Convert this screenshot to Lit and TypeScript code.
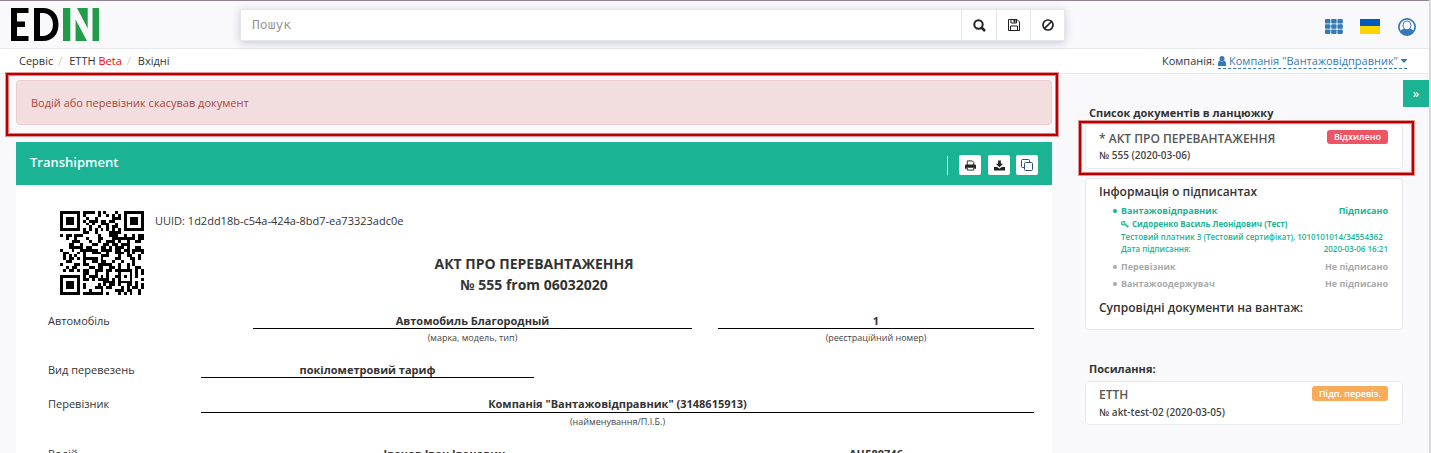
import { LitElement, html, css, svg } from "lit";
import { customElement, property } from "lit/decorators.js";

const QR_SIZE = 29;
const QR_DATA_WORDS = 44;
const QR_EC_WORDS = 26;

function gfMul(a: number, b: number): number {
  let r = 0;
  for (let i = 7; i >= 0; i--) {
    r = (r << 1) ^ ((r >>> 7) * 0x11d);
    r ^= ((b >>> i) & 1) * a;
  }
  return r & 255;
}

/** Version 3, level M, byte mode. */
function encodeQr(text: string, mask: number): boolean[][] {
  const bits: number[] = [];
  const put = (v: number, n: number) => {
    for (let i = n - 1; i >= 0; i--) bits.push((v >>> i) & 1);
  };
  put(4, 4);
  put(text.length, 8);
  for (const ch of text) put(ch.charCodeAt(0), 8);
  put(0, 4);
  while (bits.length % 8) bits.push(0);
  const words: number[] = [];
  for (let i = 0; i < bits.length; i += 8) words.push(parseInt(bits.slice(i, i + 8).join(""), 2));
  for (let p = 0xec; words.length < QR_DATA_WORDS; p ^= 0xec ^ 0x11) words.push(p);

  const div: number[] = new Array(QR_EC_WORDS).fill(0);
  div[QR_EC_WORDS - 1] = 1;
  let root = 1;
  for (let i = 0; i < QR_EC_WORDS; i++) {
    for (let j = 0; j < QR_EC_WORDS; j++) {
      div[j] = gfMul(div[j], root);
      if (j + 1 < QR_EC_WORDS) div[j] ^= div[j + 1];
    }
    root = gfMul(root, 2);
  }
  const rem: number[] = new Array(QR_EC_WORDS).fill(0);
  for (const w of words) {
    const f = w ^ (rem.shift() as number);
    rem.push(0);
    div.forEach((c, i) => (rem[i] ^= gfMul(c, f)));
  }
  const all = words.concat(rem);

  const m: boolean[][] = Array.from({ length: QR_SIZE }, () => new Array(QR_SIZE).fill(false));
  const fixed: boolean[][] = Array.from({ length: QR_SIZE }, () => new Array(QR_SIZE).fill(false));
  const set = (x: number, y: number, v: boolean) => {
    if (x < 0 || y < 0 || x >= QR_SIZE || y >= QR_SIZE) return;
    m[y][x] = v;
    fixed[y][x] = true;
  };
  for (let i = 0; i < QR_SIZE; i++) {
    set(6, i, i % 2 === 0);
    set(i, 6, i % 2 === 0);
  }
  for (const [cx, cy] of [[3, 3], [QR_SIZE - 4, 3], [3, QR_SIZE - 4]])
    for (let dy = -4; dy <= 4; dy++)
      for (let dx = -4; dx <= 4; dx++) {
        const d = Math.max(Math.abs(dx), Math.abs(dy));
        set(cx + dx, cy + dy, d !== 2 && d !== 4);
      }
  for (let dy = -2; dy <= 2; dy++)
    for (let dx = -2; dx <= 2; dx++) set(22 + dx, 22 + dy, Math.max(Math.abs(dx), Math.abs(dy)) !== 1);

  let fr = mask;
  for (let i = 0; i < 10; i++) fr = (fr << 1) ^ ((fr >>> 9) * 0x537);
  const fmt = ((mask << 10) | fr) ^ 0x5412;
  const fb = (i: number) => ((fmt >>> i) & 1) === 1;
  for (let i = 0; i <= 5; i++) set(8, i, fb(i));
  set(8, 7, fb(6));
  set(8, 8, fb(7));
  set(7, 8, fb(8));
  for (let i = 9; i < 15; i++) set(14 - i, 8, fb(i));
  for (let i = 0; i < 8; i++) set(QR_SIZE - 1 - i, 8, fb(i));
  for (let i = 8; i < 15; i++) set(8, QR_SIZE - 15 + i, fb(i));
  set(8, QR_SIZE - 8, true);

  const masks: ((x: number, y: number) => boolean)[] = [
    (x, y) => (x + y) % 2 === 0,
    (_x, y) => y % 2 === 0,
    (x) => x % 3 === 0,
    (x, y) => (x + y) % 3 === 0,
    (x, y) => (Math.floor(x / 3) + Math.floor(y / 2)) % 2 === 0,
    (x, y) => ((x * y) % 2) + ((x * y) % 3) === 0,
    (x, y) => (((x * y) % 2) + ((x * y) % 3)) % 2 === 0,
    (x, y) => (((x + y) % 2) + ((x * y) % 3)) % 2 === 0,
  ];
  let k = 0;
  for (let right = QR_SIZE - 1; right >= 1; right -= 2) {
    if (right === 6) right = 5;
    for (let v = 0; v < QR_SIZE; v++)
      for (let j = 0; j < 2; j++) {
        const x = right - j;
        const up = ((right + 1) & 2) === 0;
        const y = up ? QR_SIZE - 1 - v : v;
        if (fixed[y][x]) continue;
        const bit = k < all.length * 8 && ((all[k >>> 3] >>> (7 - (k & 7))) & 1) === 1;
        k++;
        m[y][x] = bit !== masks[mask](x, y);
      }
  }
  return m;
}

@customElement("qr-code")
export class QrCode extends LitElement {
  @property() value = "";
  @property({ type: Number }) mask = 3;
  static styles = css`
    :host { display: block; }
    svg { display: block; width: 100%; height: 100%; }
  `;
  render() {
    const rows = encodeQr(this.value, this.mask);
    const d = rows.map((r, y) => r.map((v, x) => (v ? `M${x} ${y}h1v1h-1z` : "")).join("")).join("");
    return html`<svg viewBox="0 0 29 29" shape-rendering="crispEdges">${svg`<path d=${d}/>`}</svg>`;
  }
}

@customElement("app-root")
export class AppRoot extends LitElement {
  static styles = css`
    :host {
      display: block; position: relative; box-sizing: border-box; height: 453px; overflow: hidden;
      background: #f9f9fb; color: #333; font: 11px/16px "Open Sans", "Noto Sans", sans-serif;
      border-right: 2px solid #d9d9d9;
    }
    * { box-sizing: border-box; }
    .header { height: 49px; border-top: 1px solid #8f8391; border-bottom: 1px solid #e7eaec; display: flex; align-items: flex-start; padding: 7px 13px 0 11px; }
    .logo { width: 88px; height: 33px; margin-right: 141px; }
    .search { display: flex; margin-top: 1px; width: 825px; height: 32px; box-shadow: 0 2px 8px rgba(60,60,110,.25); border: 1px solid #e5e6e7; background: #fff; }
    .field { flex: 1; padding: 0 11px; font: 13px/30px "DejaVu Sans Mono", monospace; color: #999; }
    .sbtn { width: 34px; border-left: 1px solid #e5e6e7; display: flex; align-items: center; justify-content: center; color: #222; }
    .sbtn:nth-child(2) { width: 35px; }
    .tools { margin-left: auto; display: flex; align-items: center; height: 37px; gap: 17px; color: #337ab7; }
    .flag { width: 20px; height: 15px; margin-right: 1px; background: linear-gradient(#005bbb 50%, #ffd500 50%); }
    .crumbs { height: 25px; background: #fff; border-bottom: 1px solid #e7eaec; display: flex; align-items: center; padding: 0 22px 0 19px; }
    .sep { color: #ccc; padding: 0 7px 0 5px; }
    .beta { color: #f00; }
    .company { margin-left: auto; display: flex; align-items: center; gap: 3px; }
    .clink { color: #337ab7; border-bottom: 1px dashed #337ab7; display: flex; align-items: center; gap: 3px; height: 16px; }
    .body { display: flex; padding-left: 16px; }
    .main { width: 1036px; padding-top: 6px; }
    .alert { height: 45px; background: #f2dede; border: 1px solid #ebccd1; border-radius: 4px; color: #a94442; padding: 0 14px; display: flex; align-items: center; }
    .panel { margin-top: 17px; background: #fff; height: 320px; }
    .phead { height: 43px; background: #1ab394; color: #fff; display: flex; align-items: center; padding: 3px 14px 0; font-size: 13px; font-weight: 600; }
    .ptitle { margin-top: -6px; }
    .pact { margin-left: auto; display: flex; gap: 6px; align-items: center; }
    .pbar { width: 1px; height: 19px; background: #fff; margin-right: 5px; }
    .pbtn { width: 22px; height: 20px; background: #fff; border-radius: 2px; color: #222; display: flex; align-items: center; justify-content: center; }
    .pbtn:nth-child(2) { margin-right: 1px; }
    .doc { padding: 26px 18px 0 32px; }
    .uuid { display: flex; gap: 11px; padding-left: 12px; height: 42px; line-height: 20px; }
    .qr { width: 84px; height: 84px; flex: none; }
    .h { text-align: center; font-size: 14px; font-weight: 700; line-height: 21px; padding-right: 14px; }
    .row { display: flex; }
    .r1 { margin-top: 18px; height: 49px; } .r2 { height: 34px; } .r3 { height: 50px; }
    .lab { flex: none; }
    .line { text-align: center; font-weight: 700; border-bottom: 1px solid #000; height: 16px; line-height: 16px; }
    .r3 .line { height: 17px; }
    .hint { text-align: center; font-size: 9px; line-height: 18px; color: #444; }
    .l1 { width: 205px; } .c1 { width: 439px; margin-right: 26px; } .c2 { width: 316px; }
    .l2 { width: 153px; } .c3 { width: 333px; } .c4 { width: 833px; }
    .c5 { width: 487px; margin-right: 30px; }
    .side { width: 318px; margin-left: 33px; padding-top: 6px; }
    .sh { font-weight: 700; padding: 25px 4px 0; line-height: 16px; }
    .sh2 { padding-top: 31px; }
    .card { background: #fff; border: 1px solid #e7eaec; border-radius: 4px; padding: 6px 13px; }
    .k1 { margin-top: 3px; height: 45px; padding-top: 5px; } .k2 { margin-top: 9px; height: 152px; } .k3 { margin-top: 4px; height: 44px; padding-top: 4px; }
    .top { display: flex; justify-content: space-between; }
    .ct { font-size: 12px; font-weight: 600; color: #555; line-height: 18px; }
    .cn { font-size: 10px; font-weight: 600; color: #444; line-height: 14px; }
    .k3 .cn { line-height: 16px; }
    .badge { height: 14px; line-height: 14px; margin-right: 1px; border-radius: 3px; color: #fff; font-size: 9px; font-weight: 600; padding: 0 7px; }
    .k3 .badge { height: 15px; line-height: 15px; }
    .red { background: #ed5565; } .orange { background: #f8ac59; }
    .st { font-size: 12px; font-weight: 600; line-height: 14px; }
    .s7 { margin-top: 11px; }
    .sig { color: #1ab394; font-size: 9px; display: flex; justify-content: space-between; padding: 0 1px 0 22px; line-height: 12px; font-weight: 700; }
    .s1 { margin-top: 6px; } .s3 { margin-top: 1px; } .s5 { margin-top: 6px; } .s6 { margin-top: 5px; }
    .s2 { margin-top: 1px; font-size: 8px; justify-content: flex-start; align-items: center; gap: 3px; }
    .thin { font-weight: 600; font-size: 8px; }
    .grey { color: #aaa; }
    .dot { position: relative; }
    .dot::before { content: ""; position: absolute; left: 14px; top: 4px; width: 4px; height: 4px; border-radius: 2px; background: currentColor; }
    .toggle { position: absolute; right: 0; top: 80px; width: 26px; height: 27px; background: #1ab394; color: #fff; display: flex; align-items: center; justify-content: center; font-size: 13px; padding-bottom: 1px; }
    .mark { position: absolute; border: 2px solid #b80000; box-shadow: 0 0 0 1px rgba(184,0,0,.4), inset 0 0 0 1px rgba(184,0,0,.5); }
    .m1 { left: 6px; top: 73px; width: 1052px; height: 63px; } .m2 { left: 1079px; top: 121px; width: 335px; height: 54px; }
  `;
  render() {
    return html`
      <div class="header">
        <svg class="logo" viewBox="0 0 88 33"><path d="M0 0H17.500V5H6V13.500H14V19H6V28H17.500V33H0Z"/><path fill-rule="evenodd" d="M23 0H32C42 0 47.500 7 47.500 16.500S42 33 32 33H23ZM29 5V28H32C38 28 42 23 42 16.500S38 5 32 5Z"/><path fill="#219c47" d="M52 0H59.300V33H52ZM81.500 0H88V33H81.500ZM66 0H76.700V20.500ZM64.600 11.500L76 33H64.600Z"/></svg>
        <div class="search">
          <div class="field">Пошук</div>
          <div class="sbtn"><svg width="13" height="13" viewBox="0 0 13 13" fill="none" stroke="currentColor" stroke-width="2"><circle cx="5.500" cy="5.500" r="4.200"/><path d="M8.500 8.500L12 12" stroke-width="2.500"/></svg></div>
          <div class="sbtn"><svg width="12" height="12" viewBox="0 0 12 12" fill="none" stroke="currentColor"><path d="M.5.500H9L11.500 3V11.500H.5ZM3 .5V4H8.500V.5M2.500 11.500V7H9.500V11.500"/><path d="M6.500 1V3.500" stroke-width="2"/></svg></div>
          <div class="sbtn"><svg width="12" height="12" viewBox="0 0 12 12" fill="none" stroke="currentColor" stroke-width="1.700"><circle cx="6" cy="6" r="5"/><path d="M2.500 9.500L9.500 2.500"/></svg></div>
        </div>
        <div class="tools">
          <svg width="18" height="15" viewBox="0 0 18 15" fill="currentColor">${[0, 1, 2].map((r) => [0, 1, 2].map((c) => svg`<rect x=${c * 6.2} y=${r * 5.2} width="5.400" height="4.500" rx=".8"/>`))}</svg>
          <div class="flag"></div>
          <svg width="18" height="18" viewBox="0 0 18 18"><circle cx="9" cy="9" r="8.100" fill="none" stroke="currentColor" stroke-width="1.700"/><path fill="currentColor" d="M9 2.400a4.700 5 0 0 1 3.300 8.300c1.600.5 2.800 1.400 3.300 2.800C14 16 11.500 17.300 9 17.300S4 16 2.400 13.500C2.900 12.100 4.100 11.200 5.700 10.700A4.700 5 0 0 1 9 2.400Z"/><ellipse cx="9" cy="7.300" rx="3.400" ry="3.900" fill="#f9f9fb"/></svg>
        </div>
      </div>
      <div class="crumbs"><span>Сервіс</span><span class="sep">/</span><span>ЕТТН <span class="beta">Beta</span></span><span class="sep">/</span><span>Вхідні</span>
        <div class="company"><span>Компанія:</span><span class="clink"><svg width="8" height="10" viewBox="0 0 8 10" fill="currentColor"><ellipse cx="4" cy="2.600" rx="2.500" ry="2.600"/><path d="M0 10V7.500Q0 4.800 1.800 4.500Q4 6.500 6.200 4.500Q8 4.800 8 7.500V10Z"/></svg><span>Компанія "Вантажовідправник"</span><svg width="6" height="4" viewBox="0 0 6 4" fill="currentColor"><path d="M0 0H6V.8L3 4L0 .8Z"/></svg></span></div>
      </div>
      <div class="body">
        <div class="main">
          <div class="alert">Водій або перевізник скасував документ</div>
          <div class="panel">
            <div class="phead"><span class="ptitle">Transhipment</span>
              <div class="pact"><div class="pbar"></div>
                <div class="pbtn"><svg width="11" height="11" viewBox="0 0 12 11"><path d="M2.500 5V.5H8L9.500 2V5" fill="none" stroke="currentColor"/><path d="M0 9V6Q0 4.500 1.500 4.500H10.500Q12 4.500 12 6V9H10V7H2V9Z" fill="currentColor"/><path d="M2.500 7.500H9.500V10.500H2.500Z" fill="#fff" stroke="currentColor"/></svg></div>
                <div class="pbtn"><svg width="11" height="11" viewBox="0 0 12 11" fill="currentColor"><path d="M4.500 0H7.500V3.500H10L6 7.500L2 3.500H4.500ZM0 7H3.500L6 9L8.500 7H12V11H0Z"/></svg></div>
                <div class="pbtn"><svg width="12" height="12" viewBox="0 0 12 12" fill="none" stroke="#2f4f7a"><rect x=".5" y=".5" width="8" height="8" rx="1"/><rect x="3.500" y="3.500" width="8" height="8" rx="1" fill="#fff"/></svg></div>
              </div>
            </div>
            <div class="doc">
              <div class="uuid"><qr-code class="qr" value="1d2dd18b-c54a-424a-8bd7-ea73323adc0e"></qr-code><span>UUID: 1d2dd18b-c54a-424a-8bd7-ea73323adc0e</span></div>
              <div class="h">АКТ ПРО ПЕРЕВАНТАЖЕННЯ<br>№ 555 from 06032020</div>
              <div class="row r1"><div class="lab l1">Автомобіль</div><div class="c1"><div class="line">Автомобиль Благородный</div><div class="hint">(марка, модель, тип)</div></div><div class="c2"><div class="line">1</div><div class="hint">(реєстраційний номер)</div></div></div>
              <div class="row r2"><div class="lab l2">Вид перевезень</div><div class="c3"><div class="line">покілометровий тариф</div></div></div>
              <div class="row r3"><div class="lab l2">Перевізник</div><div class="c4"><div class="line">Компанія "Вантажовідправник" (3148615913)</div><div class="hint">(найменування/П.І.Б.)</div></div></div>
              <div class="row"><div class="lab l2">Водій</div><div class="c5"><div class="line">Іванов Іван Іванович</div></div><div class="c2"><div class="line">АЦ580746</div></div></div>
            </div>
          </div>
        </div>
        <div class="side">
          <div class="sh">Список документів в ланцюжку</div>
          <div class="card k1"><div class="top"><span class="ct">* АКТ ПРО ПЕРЕВАНТАЖЕННЯ</span><span class="badge red">Відхилено</span></div><div class="cn">№ 555 (2020-03-06)</div></div>
          <div class="card k2">
            <div class="st">Інформація о підписантах</div>
            <div class="sig dot s1"><span>Вантажовідправник</span><span>Підписано</span></div>
            <div class="sig s2"><svg width="8" height="7" viewBox="0 0 8 7" fill="none" stroke="currentColor" stroke-width="1.200"><circle cx="2.300" cy="2.300" r="1.700"/><path d="M3.500 3.300L7.300 6.200M5.300 4.800L6.200 3.600M6.600 5.700L7.400 4.700"/></svg><span>Сидоренко Василь Леонідович (Тест)</span></div>
            <div class="sig thin s3"><span>Тестовий платник 3 (Тестовий сертифікат), 1010101014/34554362</span></div>
            <div class="sig thin s4"><span>Дата підписання:</span><span>2020-03-06 16:21</span></div>
            <div class="sig dot grey s5"><span>Перевізник</span><span>Не підписано</span></div>
            <div class="sig dot grey s6"><span>Вантажоодержувач</span><span>Не підписано</span></div>
            <div class="st s7">Супровідні документи на вантаж:</div>
          </div>
          <div class="sh sh2">Посилання:</div>
          <div class="card k3"><div class="top"><span class="ct">ЕТТН</span><span class="badge orange">Підп. перевіз.</span></div><div class="cn">№ akt-test-02 (2020-03-05)</div></div>
        </div>
      </div>
      <div class="toggle">»</div>
      <div class="mark m1"></div><div class="mark m2"></div>
    `;
  }
}
